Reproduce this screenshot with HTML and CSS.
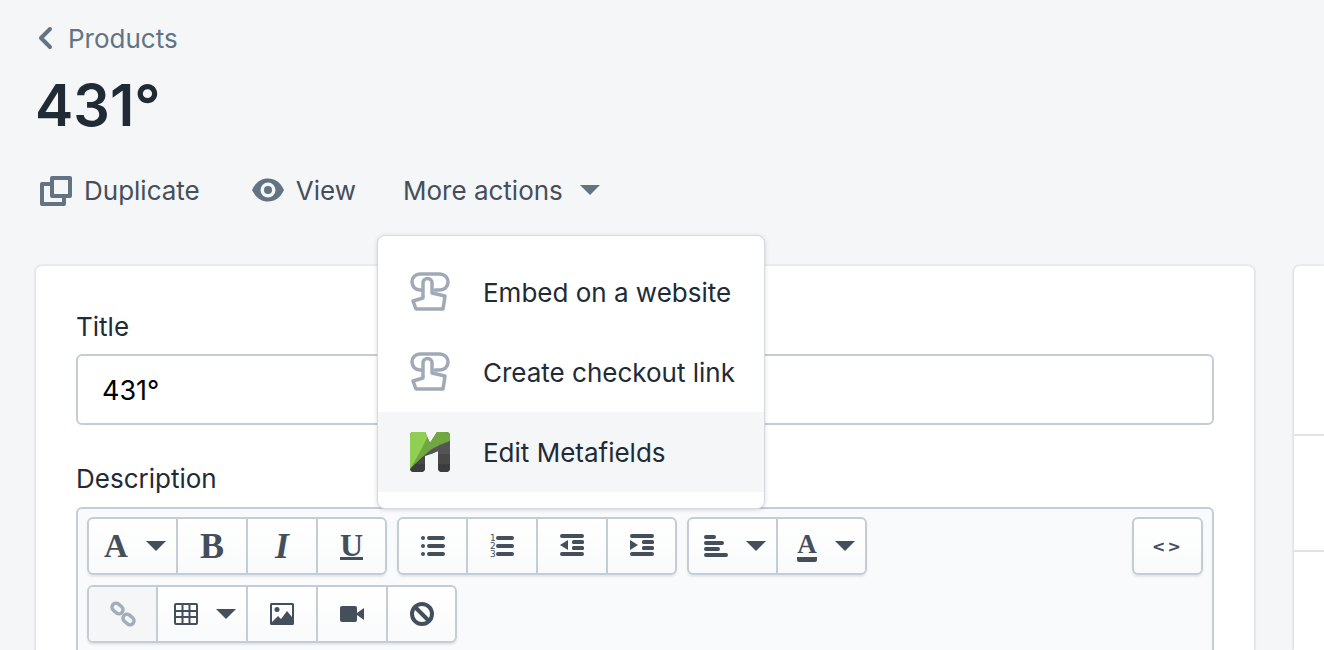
FILE: index.html
```html
<!DOCTYPE html>
<html lang="en">
  <head>
    <meta charset="UTF-8" />
    <meta name="viewport" content="width=device-width, initial-scale=1.0" />
    <title>431° - Products</title>
    <link rel="stylesheet" href="styles.css">
  </head>
  <body>
    <a class="back" href="#">
      <svg width="20" height="24" viewBox="0 0 20 24"><path d="M14 3 5 12l9 9" fill="none" stroke="#637381" stroke-width="4" stroke-linecap="round" stroke-linejoin="round"/></svg>
      Products
    </a>
    <h1>431°</h1>

    <div class="actions">
      <a class="action" href="#">
        <svg width="40" height="40" viewBox="0 0 40 40"><path d="M16 6h18a2 2 0 0 1 2 2v18a2 2 0 0 1-2 2h-4v6a2 2 0 0 1-2 2H6a2 2 0 0 1-2-2V14a2 2 0 0 1 2-2h8V8a2 2 0 0 1 2-2Zm2 4v14h14V10H18ZM8 16v16h18v-4H16a2 2 0 0 1-2-2V16H8Z" fill="#637381" fill-rule="evenodd"/></svg>
        Duplicate
      </a>
      <a class="action" href="#">
        <svg width="40" height="40" viewBox="0 0 40 40"><path d="M4 20C8 12 13 8.500 20 8.500S32 12 36 20c-4 8-9 11.500-16 11.500S8 28 4 20Z" fill="#637381"/><circle cx="20" cy="20" r="7.500" fill="#f4f6f8"/><circle cx="20" cy="20" r="4" fill="#637381"/></svg>
        View
      </a>
      <div class="action more">
        More actions
        <span class="caret caret-grey"></span>

        <div class="dropdown">
          <a class="dropdown-item" href="#">
            <svg width="40" height="40" viewBox="0 0 40 40" fill="none" stroke="#a0aab6" stroke-width="3.500" stroke-linecap="round" stroke-linejoin="round"><path d="M12 18h-2a8 8 0 0 1 0-16h20a8 8 0 0 1 0 16h-5"/><path d="M13 26V11a4.500 4.500 0 0 1 9 0v10l13 3-2 13H6L3 29l10-3Z"/></svg>
            Embed on a website
          </a>
          <a class="dropdown-item" href="#">
            <svg width="40" height="40" viewBox="0 0 40 40" fill="none" stroke="#a0aab6" stroke-width="3.500" stroke-linecap="round" stroke-linejoin="round"><path d="M12 18h-2a8 8 0 0 1 0-16h20a8 8 0 0 1 0 16h-5"/><path d="M13 26V11a4.500 4.500 0 0 1 9 0v10l13 3-2 13H6L3 29l10-3Z"/></svg>
            Create checkout link
          </a>
          <a class="dropdown-item active" href="#">
            <svg width="40" height="40" viewBox="0 0 40 40">
              <clipPath id="m-shape"><path d="M4 0h11l5 11 7-11h9a4 4 0 0 1 4 4v32a4 4 0 0 1-4 4h-4a4 4 0 0 1-4-4V19l-7 3-6 2v12a4 4 0 0 1-4 4H4a4 4 0 0 1-4-4V4a4 4 0 0 1 4-4Z"/></clipPath>
              <g clip-path="url(#m-shape)">
                <rect width="40" height="40" fill="#484848"/>
                <rect y="32" width="40" height="8" fill="#3d3d3d"/>
                <rect y="10" width="40" height="12" fill="#555"/>
                <path d="M0 0h40v9C31 12 22 16 16 22 9 28 4 33 0 37Z" fill="#6ea83f"/>
                <path d="M0 0h20C14 12 7 26 0 37Z" fill="#90cf51"/>
              </g>
            </svg>
            Edit Metafields
          </a>
        </div>
      </div>
    </div>

    <div class="layout">
      <section class="card main-card">
        <label class="field-label" for="title">Title</label>
        <input class="text-input" id="title" type="text" value="431°" />

        <div class="field-label description-label">Description</div>
        <div class="editor">
          <div class="toolbar-row">
            <div class="btn-group">
              <button class="btn btn-wide"><span class="serif">A</span><span class="caret"></span></button>
              <button class="btn"><span class="serif serif-big">B</span></button>
              <button class="btn"><span class="serif serif-big serif-italic">I</span></button>
              <button class="btn"><span class="serif underline">U</span></button>
            </div>
            <div class="btn-group">
              <button class="btn">
                <svg class="tool" width="24" height="24" viewBox="0 0 24 24"><circle cx="2" cy="4" r="2"/><circle cx="2" cy="12" r="2"/><circle cx="2" cy="20" r="2"/><rect x="6" y="2" width="18" height="4" rx="2"/><rect x="6" y="10" width="18" height="4" rx="2"/><rect x="6" y="18" width="18" height="4" rx="2"/></svg>
              </button>
              <button class="btn">
                <svg class="tool" width="24" height="24" viewBox="0 0 24 24"><text class="tiny-num" x="0" y="7">1</text><text class="tiny-num" x="0" y="15">2</text><text class="tiny-num" x="0" y="23">3</text><rect x="6" y="2" width="18" height="4" rx="2"/><rect x="6" y="10" width="18" height="4" rx="2"/><rect x="6" y="18" width="18" height="4" rx="2"/></svg>
              </button>
              <button class="btn">
                <svg class="tool" width="24" height="24" viewBox="0 0 24 24"><rect y="0" width="24" height="4" rx="2"/><rect y="18" width="24" height="4" rx="2"/><rect x="12" y="6" width="12" height="4" rx="1.500"/><rect x="12" y="12" width="12" height="4" rx="1.500"/><path d="M0 11l8-5v10Z"/></svg>
              </button>
              <button class="btn">
                <svg class="tool" width="24" height="24" viewBox="0 0 24 24"><rect y="0" width="24" height="4" rx="2"/><rect y="18" width="24" height="4" rx="2"/><rect x="12" y="6" width="12" height="4" rx="1.500"/><rect x="12" y="12" width="12" height="4" rx="1.500"/><path d="M8 11 0 6v10Z"/></svg>
              </button>
            </div>
            <div class="btn-group">
              <button class="btn btn-wide">
                <svg class="tool" width="24" height="24" viewBox="0 0 24 24"><rect y="1" width="12" height="4" rx="2"/><rect y="7" width="20" height="4" rx="2"/><rect y="13" width="16" height="4" rx="2"/><rect y="19" width="24" height="4" rx="2"/></svg>
                <span class="caret"></span>
              </button>
              <button class="btn btn-wide">
                <span class="font-color"><span class="serif serif-small">A</span></span>
                <span class="caret"></span>
              </button>
            </div>
            <div class="btn-group code-group">
              <button class="btn btn-code">&lt;&gt;</button>
            </div>
          </div>
          <div class="toolbar-row">
            <div class="btn-group">
              <button class="btn btn-off">
                <svg width="26" height="26" viewBox="0 0 26 26" fill="none" stroke="#a3aeb9" stroke-width="3.500"><rect x="1.500" y="3.500" width="12" height="8" rx="4" transform="rotate(40 7.500 7.500)"/><rect x="12.500" y="14.500" width="12" height="8" rx="4" transform="rotate(40 18.500 18.500)"/></svg>
              </button>
              <button class="btn btn-wide">
                <svg class="tool" width="24" height="24" viewBox="0 0 24 24"><path d="M2 1h20a2 2 0 0 1 2 2v18a2 2 0 0 1-2 2H2a2 2 0 0 1-2-2V3a2 2 0 0 1 2-2Zm0 2v5h5.500V3H2Zm7.500 0v5h5V3h-5Zm7 0v5H22V3h-5.500ZM2 10v4h5.500v-4H2Zm7.500 0v4h5v-4h-5Zm7 0v4H22v-4h-5.500ZM2 16v5h5.500v-5H2Zm7.500 0v5h5v-5h-5Zm7 0v5H22v-5h-5.500Z" fill-rule="evenodd"/></svg>
                <span class="caret"></span>
              </button>
              <button class="btn">
                <svg class="tool" width="24" height="24" viewBox="0 0 24 24"><path d="M1.500 1h21A1.500 1.500 0 0 1 24 2.500v19a1.500 1.500 0 0 1-1.500 1.500h-21A1.500 1.500 0 0 1 0 21.500v-19A1.500 1.500 0 0 1 1.500 1ZM2 3v17l6-6 3 3 6-8 5 6V3H2Z" fill-rule="evenodd"/><circle cx="7" cy="7.500" r="2.500"/></svg>
              </button>
              <button class="btn">
                <svg class="tool" width="24" height="24" viewBox="0 0 24 24"><rect y="4" width="17" height="16" rx="2"/><path d="M17 11l7-5v12l-7-5Z"/></svg>
              </button>
              <button class="btn">
                <svg width="24" height="24" viewBox="0 0 24 24" fill="none" stroke="#454f5b" stroke-width="4"><circle cx="12" cy="12" r="10"/><path d="M5 5l14 14"/></svg>
              </button>
            </div>
          </div>
        </div>
      </section>

      <aside class="card side-card">
        <div class="side-row side-row-top"></div>
        <div class="side-row side-row-mid"></div>
        <div class="side-row"></div>
      </aside>
    </div>
  </body>
</html>
```
FILE: styles.css
```css
/* Global styles */
* {
  box-sizing: border-box;
  font-family: "Inter", "Liberation Sans", sans-serif;
}

html {
  overflow: hidden;
}

body {
  margin: 0;
  width: 1324px;
  height: 650px;
  padding: 20px 0 0 36px;
  overflow: hidden;
  background-color: #f4f6f8;
  color: #212b36;
}

a {
  color: inherit;
  text-decoration: none;
}

.back {
  display: flex;
  align-items: center;
  gap: 12px;
  height: 36px;
  font-size: 26px;
  color: #637381;
}

h1 {
  margin: 17px 0 0 -1px;
  font-size: 57.5px;
  line-height: 64px;
  font-weight: 600;
}

.actions {
  display: flex;
  gap: 48px;
  height: 40px;
  margin-top: 33px;
}

.action {
  position: relative;
  display: flex;
  align-items: center;
  gap: 8px;
  font-size: 26px;
  color: #454f5b;
}

.more {
  gap: 17px;
  margin-left: -1px;
}

.caret {
  display: inline-block;
  width: 0;
  height: 0;
  border-left: 10px solid transparent;
  border-right: 10px solid transparent;
  border-top: 10px solid #454f5b;
}

.caret-grey {
  border-top-color: #637381;
}

.dropdown {
  position: absolute;
  z-index: 2;
  top: 65px;
  left: -26px;
  width: 388px;
  padding: 16px 0;
  background: #ffffff;
  border: 1px solid #d5dae0;
  border-radius: 8px;
  box-shadow: 0 1px 4px rgba(63, 63, 68, 0.2);
}

.dropdown-item {
  display: flex;
  align-items: center;
  gap: 33px;
  height: 80px;
  padding-left: 32px;
  font-size: 26px;
  color: #212b36;
}

.dropdown-item.active {
  background-color: #f4f6f8;
}

.layout {
  display: flex;
  gap: 40px;
  height: 384px;
  margin-top: 56px;
}

.card {
  background: #ffffff;
  border-radius: 6px 6px 0 0;
  box-shadow: 0 0 0 2px rgba(63, 63, 68, 0.05), 0 1px 3px rgba(63, 63, 68, 0.12);
}

.main-card {
  flex: none;
  width: 1218px;
  padding: 41px 40px 0 40px;
}

.side-card {
  flex: none;
  width: 30px;
  border-radius: 6px 0 0 0;
}

.side-row {
  border-bottom: 2px solid #dfe3e8;
}

.side-row-top {
  height: 170px;
}

.side-row-mid {
  height: 116px;
}

.side-row:last-child {
  border-bottom: none;
}

.field-label {
  display: block;
  font-size: 26px;
  line-height: 40px;
  color: #212b36;
}

.description-label {
  margin-top: 34px;
}

.text-input {
  display: block;
  width: 100%;
  height: 71px;
  margin-top: 7px;
  padding: 2px 24px 0;
  font-size: 27px;
  color: #000000;
  background: #ffffff;
  border: 2px solid #c4cdd5;
  border-radius: 6px;
}

.editor {
  display: flex;
  flex-direction: column;
  gap: 10px;
  height: 143px;
  margin-top: 8px;
  padding: 8px 9px 0 9px;
  background-color: #f9fafb;
  border: 2px solid #c4cdd5;
  border-bottom: none;
  border-radius: 6px 6px 0 0;
}

.toolbar-row {
  display: flex;
  gap: 10px;
}

.btn-group {
  display: flex;
  height: 58px;
  background: linear-gradient(to bottom, #ffffff, #f9fafb);
  border: 2px solid #c4cdd5;
  border-radius: 6px;
  box-shadow: 0 2px 2px rgba(63, 63, 68, 0.1);
}

.code-group {
  margin-left: auto;
}

.btn {
  display: flex;
  align-items: center;
  justify-content: center;
  gap: 18px;
  width: 70px;
  padding: 0;
  background: none;
  border: none;
  border-right: 2px solid #c4cdd5;
  color: #454f5b;
}

.btn:first-child {
  width: 69px;
}

.btn:last-child {
  width: 67px;
  border-right: none;
}

.btn-wide {
  width: 90px;
  padding-left: 5px;
}

.btn-wide:first-child {
  width: 89px;
}

.btn-wide:last-child {
  width: 87px;
  padding-left: 9px;
}

.btn-off {
  background-color: #f4f6f8;
  border-radius: 4px 0 0 4px;
}

.btn-code {
  width: 67px !important;
  padding-top: 1px;
  font-family: "DejaVu Sans", sans-serif;
  font-size: 16px;
  font-weight: 700;
  letter-spacing: 2px;
}

.tool {
  fill: #454f5b;
  overflow: visible;
}

.tiny-num {
  font-family: "DejaVu Sans", sans-serif;
  font-size: 9px;
  fill: #454f5b;
}

.serif {
  font-family: "Liberation Serif", serif;
  font-size: 33px;
  font-weight: 700;
  line-height: 30px;
}

.serif-big {
  font-size: 36px;
}

.serif-italic {
  font-style: italic;
}

.serif-small {
  font-size: 27px;
  line-height: 26px;
}

.underline {
  font-size: 32px;
  border-bottom: 3px solid #454f5b;
  line-height: 24px;
}

.font-color {
  display: block;
  width: 20px;
  text-align: center;
  border-bottom: 5px solid #454f5b;
  border-radius: 2px;
}
```
